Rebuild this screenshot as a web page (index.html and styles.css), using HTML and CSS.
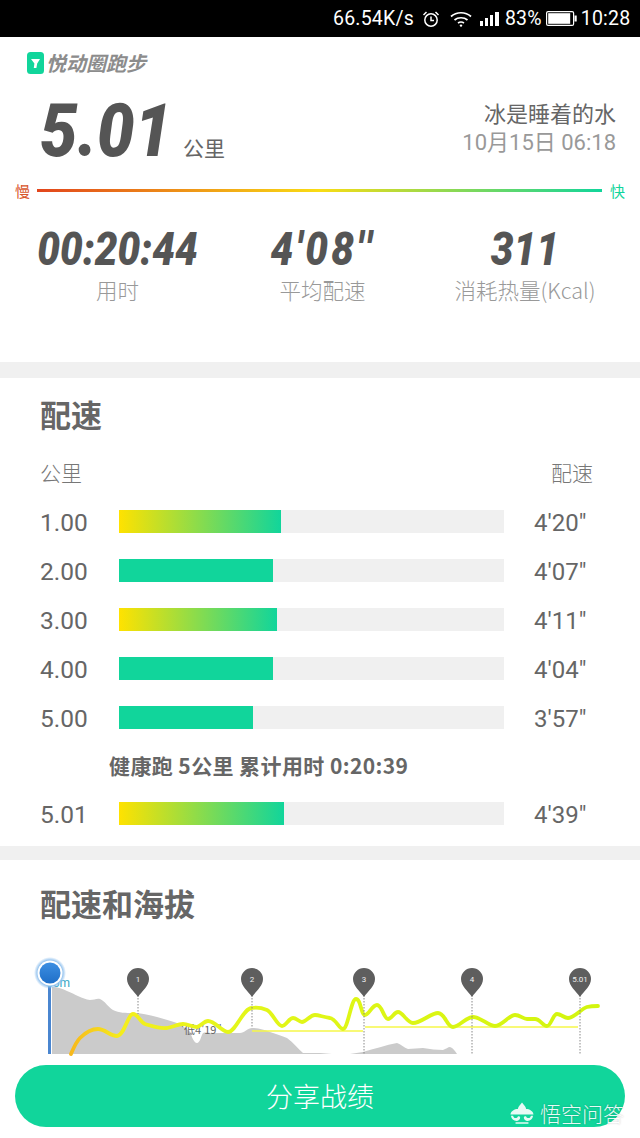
FILE: index.html
```html
<!DOCTYPE html>
<html lang="zh-CN">
<head>
    <meta charset="UTF-8">
    <meta name="viewport" content="width=device-width, initial-scale=1.0">
    <title>悦动圈跑步</title>
    <link rel="stylesheet" href="styles.css">
</head>
<body>
    <div class="status-bar">
        <span class="speed">66.54K/s</span>
        <svg class="ic-alarm" width="18" height="18" viewBox="0 0 18 18" fill="none" stroke="#fff" stroke-width="1.5">
            <circle cx="9" cy="10" r="6.2"/>
            <path d="M9 6.5V10.5H12M1.5 5L4.5 2M16.5 5L13.5 2"/>
        </svg>
        <svg class="ic-wifi" width="22" height="16" viewBox="0 0 22 16" fill="none" stroke="#fff" stroke-width="1.7">
            <path d="M1 5.5C6.5 0.5 15.5 0.5 21 5.5M4.5 9C8 6 14 6 17.5 9M8 12C9.8 10.8 12.2 10.8 14 12"/>
            <circle cx="11" cy="14.6" r="1.2" fill="#fff" stroke="none"/>
        </svg>
        <svg class="ic-signal" width="20" height="14" viewBox="0 0 20 14" fill="#fff">
            <rect x="0" y="9" width="3" height="5"/>
            <rect x="5" y="6" width="3" height="8"/>
            <rect x="10" y="3" width="3" height="11"/>
            <rect x="15" y="0" width="4" height="14"/>
        </svg>
        <span class="pct">83%</span>
        <svg class="ic-battery" width="31" height="15" viewBox="0 0 31 15">
            <rect x="0.6" y="0.6" width="27" height="13.8" rx="1.5" fill="none" stroke="#fff" stroke-width="1.2"/>
            <rect x="2.2" y="2.2" width="22" height="10.6" fill="#fff"/>
            <rect x="28.5" y="4.5" width="2.2" height="6" fill="#fff"/>
        </svg>
        <span class="clock">10:28</span>
    </div>

    <section class="summary">
        <div class="brand">
            <svg width="17" height="22" viewBox="0 0 17 22">
                <rect width="17" height="22" rx="3.5" fill="#11d59b"/>
                <path d="M4 7H13L10.2 11.5L9.4 16H6.8L7.4 11.5Z" fill="#fff"/>
            </svg>
            <span class="brand-name">悦动圈跑步</span>
        </div>
        <div class="headline">
            <div class="distance">
                <span class="distance-num">5.01</span>
                <span class="distance-unit">公里</span>
            </div>
            <div class="who">
                <div class="who-name">冰是睡着的水</div>
                <div class="who-date">10月15日 06:18</div>
            </div>
        </div>
        <div class="legend">
            <span class="slow">慢</span>
            <div class="legend-line"></div>
            <span class="fast">快</span>
        </div>
        <div class="stats">
            <div class="stat">
                <div class="stat-num">00:20:44</div>
                <div class="stat-label">用时</div>
            </div>
            <div class="stat">
                <div class="stat-num stat-pace">4'08''</div>
                <div class="stat-label">平均配速</div>
            </div>
            <div class="stat">
                <div class="stat-num">311</div>
                <div class="stat-label">消耗热量(Kcal)</div>
            </div>
        </div>
    </section>

    <section class="pace">
        <h2>配速</h2>
        <div class="pace-head">
            <span>公里</span>
            <span>配速</span>
        </div>
        <div class="pace-row">
            <span class="km">1.00</span>
            <div class="track"><div class="fill mixed" style="width:162px"></div></div>
            <span class="time">4'20"</span>
        </div>
        <div class="pace-row">
            <span class="km">2.00</span>
            <div class="track"><div class="fill" style="width:154px"></div></div>
            <span class="time">4'07"</span>
        </div>
        <div class="pace-row">
            <span class="km">3.00</span>
            <div class="track"><div class="fill mixed" style="width:158px"></div></div>
            <span class="time">4'11"</span>
        </div>
        <div class="pace-row">
            <span class="km">4.00</span>
            <div class="track"><div class="fill" style="width:154px"></div></div>
            <span class="time">4'04"</span>
        </div>
        <div class="pace-row">
            <span class="km">5.00</span>
            <div class="track"><div class="fill" style="width:134px"></div></div>
            <span class="time">3'57"</span>
        </div>
        <div class="pace-total">健康跑 5公里 累计用时 0:20:39</div>
        <div class="pace-row">
            <span class="km">5.01</span>
            <div class="track"><div class="fill mixed" style="width:165px"></div></div>
            <span class="time">4'39"</span>
        </div>
    </section>

    <section class="chart">
        <h2>配速和海拔</h2>
        <svg class="chart-svg" width="640" height="110" viewBox="0 950 640 110">
            <defs>
                <linearGradient id="paceLine" gradientUnits="userSpaceOnUse" x1="70" y1="0" x2="600" y2="0">
                    <stop offset="0" stop-color="#f8b81c"/>
                    <stop offset="0.1" stop-color="#f4ee1c"/>
                    <stop offset="0.3" stop-color="#e4f61a"/>
                    <stop offset="1" stop-color="#d2f50e"/>
                </linearGradient>
                <radialGradient id="dotGlow">
                    <stop offset="0.78" stop-color="#8fc0ee"/>
                    <stop offset="1" stop-color="#8fc0ee" stop-opacity="0"/>
                </radialGradient>
                <linearGradient id="dotFill" x1="0" y1="0" x2="0" y2="1">
                    <stop offset="0" stop-color="#3d8fe2"/>
                    <stop offset="1" stop-color="#1f6fc8"/>
                </linearGradient>
            </defs>
            <path fill="#cbcbcb" d="M52 987C58 987 63 989 67 991C75 994 82 999 90 1000C94 1000 97 998 100 999C105 1001 108 1007 113 1010C119 1013 126 1013 133 1013C141 1013 149 1015 157 1017C164 1019 171 1021 177 1023C183 1026 187 1029 190 1032C192 1037 194 1043 197 1043C200 1043 201 1036 203 1033C206 1032 209 1033 213 1033H240C244 1033 248 1028 252 1028C258 1028 265 1030 270 1032C276 1034 282 1036 287 1038C293 1042 298 1049 303 1053H320L332 1054H52Z"/>
            <path fill="#cbcbcb" d="M350 1054L363 1052C374 1049 386 1045 397 1043C401 1044 404 1048 408 1049C413 1049 418 1048 423 1048C430 1049 437 1050 443 1050C446 1049 448 1047 450 1047C453 1048 455 1051 457 1054Z"/>
            <rect x="48" y="985" width="3" height="69" fill="#4a86d0"/>
            <text class="alt" x="70" y="987">56m</text>
            <circle cx="50" cy="973" r="16" fill="url(#dotGlow)"/>
            <circle cx="50" cy="973" r="12.5" fill="#fff"/>
            <circle cx="50" cy="973" r="10.5" fill="url(#dotFill)"/>
            <path d="M252 1031H363M365 1027H578" stroke="#f6f84a" stroke-width="1.5" fill="none"/>
            <text class="low" x="181" y="1034">'低4'19"</text>
            <path fill="none" stroke="url(#paceLine)" stroke-width="3.8" stroke-linecap="round" stroke-linejoin="round"
                d="M71 1054C74 1047 76 1042 80 1038C85 1033 92 1029 98 1029C105 1029 110 1036 117 1036C124 1036 128 1014 133 1014C138 1014 140 1022 145 1024C152 1026 160 1029 167 1028C173 1027 178 1024 183 1024C188 1024 192 1027 197 1027C201 1026 204 1021 208 1021C215 1021 222 1032 228 1032C236 1032 243 1008 252 1008C258 1007 262 1008 267 1010C273 1013 277 1026 282 1026C286 1026 289 1018 293 1018C297 1018 299 1022 302 1022C306 1022 310 1015 315 1015C319 1015 323 1017 330 1018C336 1019 339 1029 343 1029C348 1029 351 999 356 999C361 999 361 1015 365 1015C369 1015 372 1005 377 1005C382 1005 384 1019 388 1019C392 1019 394 1012 398 1012C403 1012 407 1023 413 1023C421 1023 431 1013 438 1013C445 1013 447 1027 453 1027C459 1027 466 1017 473 1017C481 1017 488 1026 495 1026C502 1026 509 1015 515 1015C520 1015 523 1019 527 1019H535C540 1019 543 1026 547 1026C551 1026 553 1014 557 1014C561 1014 564 1018 568 1018C574 1018 581 1009 587 1007C591 1006 595 1006 598 1006"/>
            <g class="pin">
                <path class="pin-line" d="M138 995V1014"/>
                <path d="M138 997C134 991 127 986 127 979A11 11 0 0 1 149 979C149 986 142 991 138 997Z"/>
                <text x="138" y="982">1</text>
            </g>
            <g class="pin">
                <path class="pin-line" d="M252 995V1028"/>
                <path d="M252 997C248 991 241 986 241 979A11 11 0 0 1 263 979C263 986 256 991 252 997Z"/>
                <text x="252" y="982">2</text>
            </g>
            <g class="pin">
                <path class="pin-line" d="M364 995V1054"/>
                <path d="M364 997C360 991 353 986 353 979A11 11 0 0 1 375 979C375 986 368 991 364 997Z"/>
                <text x="364" y="982">3</text>
            </g>
            <g class="pin">
                <path class="pin-line" d="M472 995V1054"/>
                <path d="M472 997C468 991 461 986 461 979A11 11 0 0 1 483 979C483 986 476 991 472 997Z"/>
                <text x="472" y="982">4</text>
            </g>
            <g class="pin">
                <path class="pin-line" d="M580 995V1054"/>
                <path d="M580 997C576 991 569 986 569 979A11 11 0 0 1 591 979C591 986 584 991 580 997Z"/>
                <text x="580" y="982">5.01</text>
            </g>
        </svg>
    </section>

    <div class="share">分享战绩</div>

    <div class="watermark">
        <svg width="24" height="23" viewBox="0 0 26 24" fill="#fff">
            <path d="M13 0C14.5 2.5 17 4 17.5 7C21 7 25 9 25.5 13H0.5C1 9 5 7 8.5 7C9 4 11.5 2.5 13 0Z"/>
            <path d="M1 14.5C1.5 18 4 20 7 20C9 20 11 18.5 11 16.5C11 15 9.5 14.5 8.5 15.2C8 16.8 6 17.5 4.5 16.5C3.8 16 3.5 15.2 3.4 14.5ZM25 14.5C24.5 18 22 20 19 20C17 20 15 18.5 15 16.5C15 15 16.5 14.5 17.5 15.2C18 16.8 20 17.5 21.5 16.5C22.2 16 22.5 15.2 22.6 14.5ZM6 21.5H20V23H6Z"/>
        </svg>
        <span>悟空问答</span>
    </div>
</body>
</html>
```

FILE: styles.css
```css
* {
    box-sizing: border-box;
}

html, body {
    margin: 0;
    padding: 0;
}

body {
    position: relative;
    width: 640px;
    height: 1138px;
    overflow: hidden;
    background-color: #fff;
    font-family: "Noto Sans CJK SC", Roboto, sans-serif;
    color: #666;
}

/* status bar */
.status-bar {
    height: 37px;
    background-color: #000;
    color: #fff;
    display: flex;
    align-items: center;
    padding-left: 333px;
    font-family: Roboto, sans-serif;
    font-size: 19.5px;
    letter-spacing: 0.2px;
}

.ic-alarm {
    margin-left: 8px;
}

.ic-wifi {
    margin-left: 10px;
}

.ic-signal {
    margin-left: 8px;
}

.pct {
    margin-left: 5px;
}

.ic-battery {
    margin-left: 4px;
}

.clock {
    margin-left: 4px;
}

/* summary */
.summary {
    height: 325px;
    padding-top: 15px;
}

.brand {
    display: flex;
    align-items: center;
    gap: 2px;
    padding-left: 27px;
}

.brand-name {
    font-size: 20px;
    line-height: 22px;
    font-weight: 700;
    font-style: italic;
    color: #8c8c8c;
}

.headline {
    display: flex;
    justify-content: space-between;
    padding: 12px 24px 0 40px;
    height: 106px;
}

.distance {
    display: flex;
    align-items: baseline;
    gap: 13px;
    padding-top: 1px;
}

.distance-num {
    display: inline-block;
    width: 130px;
    font-family: Roboto, sans-serif;
    font-size: 74px;
    line-height: 88px;
    font-weight: 900;
    font-style: italic;
    white-space: nowrap;
    color: #555;
    transform: scaleX(0.9);
    transform-origin: left center;
}

.distance-unit {
    font-size: 21px;
    color: #666;
}

.who {
    text-align: right;
    padding-top: 11px;
}

.who-name {
    font-size: 22px;
    line-height: 30px;
    color: #666;
}

.who-date {
    font-family: Roboto, "Noto Sans CJK SC", sans-serif;
    font-size: 22px;
    line-height: 32px;
    color: #999;
}

.legend {
    display: flex;
    align-items: center;
    height: 20px;
    padding: 0 15px;
    font-size: 15px;
}

.slow {
    color: #d9552a;
}

.fast {
    color: #11d59b;
}

.legend-line {
    flex: 1;
    height: 3px;
    margin: 0 8px 0 7px;
    background: linear-gradient(90deg, #e2451c 0%, #f9dc14 50%, #11d59b 100%);
}

.stats {
    display: grid;
    grid-template-columns: 205px 205px 200px;
    padding: 24px 0 0 15px;
}

.stat {
    text-align: center;
}

.stat-num {
    font-family: Roboto, sans-serif;
    font-size: 46px;
    line-height: 50px;
    font-weight: 900;
    font-style: italic;
    white-space: nowrap;
    color: #555;
    transform: scaleX(0.88);
}

.stat-pace {
    letter-spacing: 3.5px;
}

.stat-label {
    font-size: 21.5px;
    line-height: 32px;
    font-weight: 300;
    color: #999;
}

/* pace list */
.pace {
    border-top: 16px solid #f0f0f0;
    height: 484px;
    padding: 15px 47px 0 40px;
}

h2 {
    margin: 0;
    font-size: 31px;
    line-height: 42px;
    font-weight: 700;
    color: #666;
}

.pace-head {
    display: flex;
    justify-content: space-between;
    margin-top: 19px;
    font-size: 21px;
    line-height: 36px;
    font-weight: 300;
    color: #777;
}

.pace-row {
    display: grid;
    grid-template-columns: 79px 385px 1fr;
    align-items: center;
    height: 49px;
    font-family: Roboto, sans-serif;
}

.pace-head + .pace-row {
    margin-top: 7px;
}

.km {
    padding-top: 2px;
    font-size: 24.5px;
    color: #666;
}

.time {
    padding: 2px 0 0 30px;
    font-size: 24px;
    color: #666;
    white-space: nowrap;
}

.track {
    height: 23px;
    background-color: #f0f0f0;
}

.fill {
    height: 100%;
    background-color: #11d59b;
}

.fill.mixed {
    background: linear-gradient(90deg, #ffe200 0%, #11d59b 100%);
}

.pace-total {
    padding-left: 69px;
    font-size: 21px;
    line-height: 47px;
    font-weight: 700;
    letter-spacing: 0.4px;
    color: #666;
}

/* chart */
.chart {
    border-top: 14px solid #f0f0f0;
    padding-top: 22px;
}

.chart h2 {
    padding-left: 40px;
}

.chart-svg {
    display: block;
    margin-top: 26px;
}

.alt {
    font-family: Roboto, sans-serif;
    font-size: 12px;
    fill: #35a6c4;
    text-anchor: end;
}

.low {
    font-family: "Noto Sans CJK SC", sans-serif;
    font-size: 11px;
    fill: #666;
}

.pin path {
    fill: #5e5e5e;
}

.pin .pin-line {
    fill: none;
    stroke: #888;
    stroke-width: 1;
    stroke-dasharray: 1.5 1.5;
}

.pin text {
    font-family: Roboto, sans-serif;
    font-size: 8px;
    fill: #eee;
    text-anchor: middle;
}

/* overlays */
.share {
    position: absolute;
    left: 15px;
    top: 1065px;
    width: 610px;
    height: 62px;
    border-radius: 31px;
    background-color: #11d59b;
    color: #fff;
    font-size: 27px;
    font-weight: 300;
    line-height: 62px;
    text-align: center;
}

.watermark {
    position: absolute;
    left: 510px;
    top: 1099px;
    display: flex;
    align-items: center;
    gap: 6px;
    color: #fff;
    font-size: 21px;
    line-height: 28px;
    font-weight: 300;
    white-space: nowrap;
    opacity: 0.9;
    text-shadow: 0 0 2px rgba(0, 0, 0, 0.3);
}
```
